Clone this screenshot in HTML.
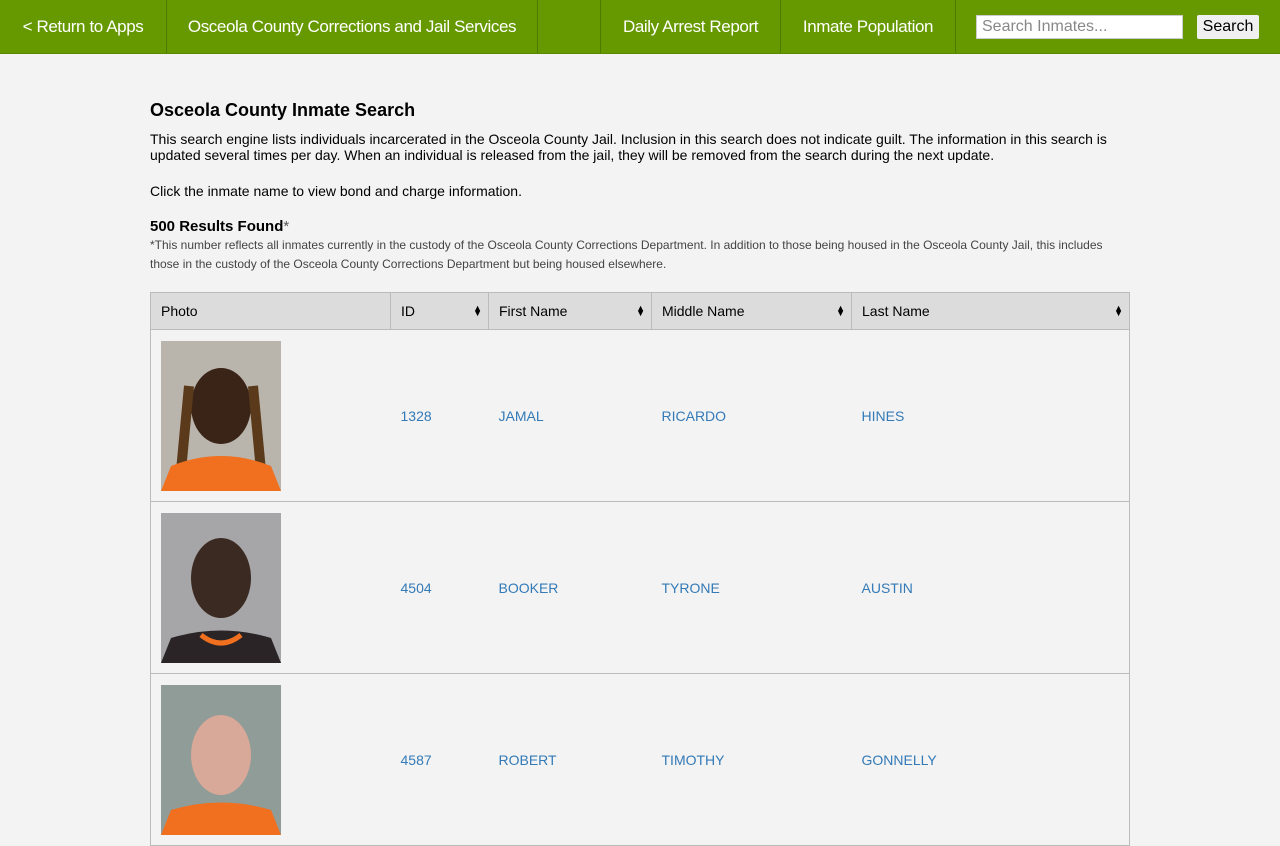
<!DOCTYPE html>
<html><head><style>
body{margin:0;background:#f3f3f3;font-family:"Liberation Sans",Arial,sans-serif;width:1280px;height:800px;overflow:hidden;position:relative}
.nav{position:absolute;left:0;top:0;width:1280px;height:53px;background:#669900;border-bottom:1px solid #5a8800}
.nav a{position:absolute;top:0;height:53px;line-height:53px;color:#fff;font-size:17px;text-align:center;letter-spacing:-0.4px}
.sep{position:absolute;top:0;width:1px;height:53px;background:#4f7a00}
.srch{position:absolute;left:976px;top:15px;width:207px;height:24px;background:#fff;border:1px solid #ccc;box-sizing:border-box;color:#888;font-size:16px;line-height:22px;padding-left:5px}
.btn{position:absolute;left:1197px;top:15px;width:62px;height:24px;background:#f0f0f0;border-radius:2px;font-size:16px;line-height:24px;text-align:center;color:#000}
.c{position:absolute;left:150px;width:980px}
h1{position:absolute;left:150px;top:100px;margin:0;font-size:18px;font-weight:bold}
p{margin:0;font-size:14px;line-height:16px;color:#000}
.small{font-size:12px;line-height:19px;color:#444}
table{position:absolute;left:150px;top:292px;width:980px;border-collapse:collapse;font-size:14px}
th{background:#dcdcdc;height:37px;text-align:left;font-weight:normal;padding:0 10px;border:1px solid #bbb;position:relative;box-sizing:border-box}
th .s{position:absolute;right:6px;top:13px;font-size:9px;line-height:5px}
td{border-bottom:1px solid #bbb;height:171px;padding:0 10px;color:#337ab7;vertical-align:middle}
tr td:first-child{border-left:1px solid #bbb}
tr td:last-child{border-right:1px solid #bbb}
.ph{width:120px;height:150px;display:block}
</style></head><body>
<div class="nav">
<a style="left:0;width:166px">&lt; Return to Apps</a><div class="sep" style="left:166px"></div>
<a style="left:167px;width:370px">Osceola County Corrections and Jail Services</a><div class="sep" style="left:537px"></div>
<div class="sep" style="left:600px"></div>
<a style="left:601px;width:179px">Daily Arrest Report</a><div class="sep" style="left:780px"></div>
<a style="left:781px;width:174px">Inmate Population</a><div class="sep" style="left:955px"></div>
<div class="srch">Search Inmates...</div><div class="btn">Search</div>
</div>
<h1>Osceola County Inmate Search</h1>
<div class="c" style="top:131px"><p>This search engine lists individuals incarcerated in the Osceola County Jail. Inclusion in this search does not indicate guilt. The information in this search is updated several times per day. When an individual is released from the jail, they will be removed from the search during the next update.</p></div>
<div class="c" style="top:183px"><p>Click the inmate name to view bond and charge information.</p></div>
<div class="c" style="top:219px"><p style="font-size:15px;font-weight:bold">500 Results Found<span style="font-weight:normal;color:#555">*</span></p></div>
<div class="c" style="top:236px"><p class="small">*This number reflects all inmates currently in the custody of the Osceola County Corrections Department. In addition to those being housed in the Osceola County Jail, this includes those in the custody of the Osceola County Corrections Department but being housed elsewhere.</p></div>
<table>
<tr><th style="width:240px">Photo</th><th style="width:98px">ID<span class="s">▲<br>▼</span></th><th style="width:163px">First Name<span class="s">▲<br>▼</span></th><th style="width:200px">Middle Name<span class="s">▲<br>▼</span></th><th>Last Name<span class="s">▲<br>▼</span></th></tr>
<tr><td><svg class="ph" viewBox="0 0 120 150"><rect width="120" height="150" fill="#b9b4ac"/><ellipse cx="60" cy="65" rx="30" ry="38" fill="#3a2418"/><path d="M28 45 L20 130 M92 45 L100 130" stroke="#5a3a1a" stroke-width="10"/><path d="M0 150 L10 125 Q60 105 110 125 L120 150Z" fill="#f07020"/></svg></td><td>1328</td><td>JAMAL</td><td>RICARDO</td><td>HINES</td></tr>
<tr><td><svg class="ph" viewBox="0 0 120 150"><rect width="120" height="150" fill="#a6a6a8"/><ellipse cx="60" cy="65" rx="30" ry="40" fill="#3b2a22"/><path d="M0 150 L10 125 Q60 110 110 125 L120 150Z" fill="#2a2426"/><path d="M40 122 Q60 138 80 122" stroke="#f07020" stroke-width="5" fill="none"/></svg></td><td>4504</td><td>BOOKER</td><td>TYRONE</td><td>AUSTIN</td></tr>
<tr><td><svg class="ph" viewBox="0 0 120 150"><rect width="120" height="150" fill="#8f9c98"/><ellipse cx="60" cy="70" rx="30" ry="40" fill="#d8a898"/><path d="M0 150 L10 125 Q60 110 110 125 L120 150Z" fill="#f07020"/></svg></td><td>4587</td><td>ROBERT</td><td>TIMOTHY</td><td>GONNELLY</td></tr>
</table>
</body></html>
